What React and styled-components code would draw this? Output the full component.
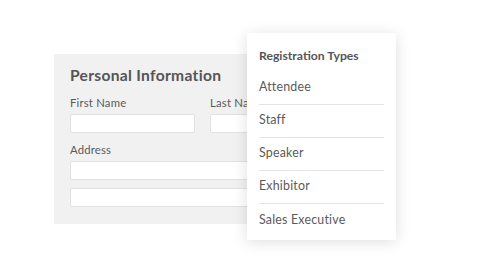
import React from "react";
import styled, { createGlobalStyle } from "styled-components";

const GlobalStyle = createGlobalStyle`
  body {
    margin: 0;
    background: #ffffff;
    font-family: Lato, "Open Sans", sans-serif;
    color: #555555;
  }
`;

export const Stage = styled.div`
  position: relative;
  width: 480px;
  height: 267px;
  padding: 54px 0 0 54px;
  box-sizing: border-box;
  overflow: hidden;
`;

export const FormPanel = styled.section`
  width: 340px;
  height: 170px;
  box-sizing: border-box;
  padding: 11px 16px;
  background: #f1f1f1;
`;

export const PanelTitle = styled.h2`
  margin: 0 0 11px;
  font-size: 15.6px;
  line-height: 20px;
  font-weight: 700;
  color: #555555;
  letter-spacing: 0.3px;
`;

export const FieldRow = styled.div`
  display: grid;
  grid-template-columns: 123px 123px;
  column-gap: 17px;
`;

export const Field = styled.div`
  display: flex;
  flex-direction: column;
  margin-bottom: ${(p) => p.$gap || 0}px;
`;

export const Label = styled.label`
  font-size: 11.3px;
  line-height: 14px;
  color: #5a5a5a;
  margin-bottom: 4px;
  letter-spacing: 0.2px;
`;

export const TextInput = styled.div`
  width: ${(p) => p.$width || 123}px;
  height: 17px;
  background: #ffffff;
  border: 1px solid #e2e2e2;
  border-radius: 2px;
  margin-bottom: ${(p) => p.$gap || 0}px;
`;

export const Menu = styled.div`
  position: absolute;
  left: 247px;
  top: 33px;
  width: 149px;
  box-sizing: border-box;
  padding: 14px 12px 3px;
  background: #ffffff;
  box-shadow: 0 2px 14px rgba(0, 0, 0, 0.13);
`;

export const MenuTitle = styled.div`
  font-size: 12.2px;
  line-height: 18px;
  font-weight: 700;
  color: #555555;
  margin-bottom: 7px;
`;

export const MenuItem = styled.div`
  height: 33px;
  box-sizing: border-box;
  padding-bottom: 3px;
  display: flex;
  align-items: center;
  font-size: 12.4px;
  color: #5a5a5a;
  letter-spacing: 0.2px;
  border-bottom: ${(p) => (p.$last ? "none" : "1px solid #e4e4e4")};
`;

const types = ["Attendee", "Staff", "Speaker", "Exhibitor", "Sales Executive"];

const App = () => {
  return (
    <>
      <GlobalStyle />
      <Stage>
        <FormPanel>
          <PanelTitle>Personal Information</PanelTitle>
          <FieldRow>
            <Field $gap={10}>
              <Label>First Name</Label>
              <TextInput />
            </Field>
            <Field $gap={10}>
              <Label>Last Name</Label>
              <TextInput />
            </Field>
          </FieldRow>
          <Field>
            <Label>Address</Label>
            <TextInput $width={300} $gap={8} />
            <TextInput $width={300} />
          </Field>
        </FormPanel>
        <Menu>
          <MenuTitle>Registration Types</MenuTitle>
          {types.map((t, i) => (
            <MenuItem key={t} $last={i === types.length - 1}>
              {t}
            </MenuItem>
          ))}
        </Menu>
      </Stage>
    </>
  );
};

export default App;
